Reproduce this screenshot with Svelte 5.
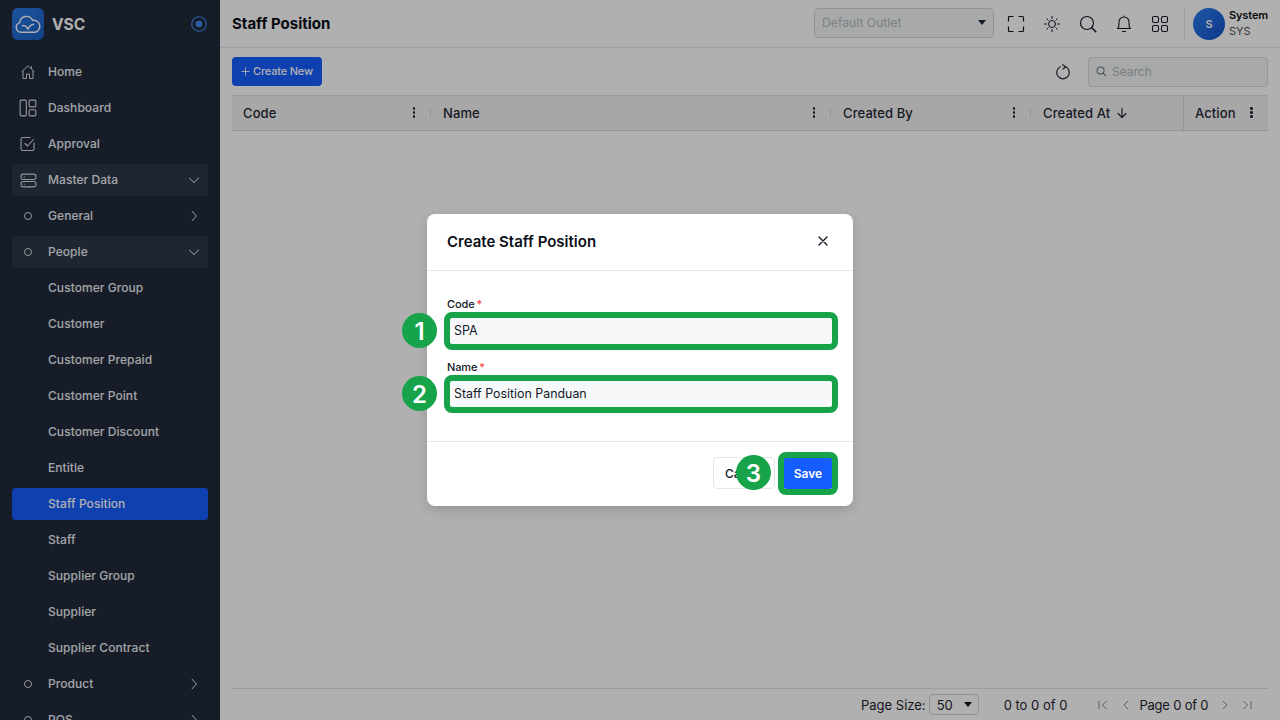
<script>
  const topNav = [
    { label: 'Home', icon: 'home' },
    { label: 'Dashboard', icon: 'dash' },
    { label: 'Approval', icon: 'check' },
    { label: 'Master Data', icon: 'server', chev: 'down', open: true },
    { label: 'General', icon: 'dot', chev: 'right' },
    { label: 'People', icon: 'dot', chev: 'down', open: true },
    { label: 'Customer Group' },
    { label: 'Customer' },
    { label: 'Customer Prepaid' },
    { label: 'Customer Point' },
    { label: 'Customer Discount' },
    { label: 'Entitle' },
    { label: 'Staff Position', active: true },
    { label: 'Staff' },
    { label: 'Supplier Group' },
    { label: 'Supplier' },
    { label: 'Supplier Contract' },
    { label: 'Product', icon: 'dot', chev: 'right' },
    { label: 'POS', icon: 'dot', chev: 'right' }
  ];
  const cols = [
    { label: 'Code', cls: 'c-code' },
    { label: 'Name', cls: 'c-name' },
    { label: 'Created By', cls: 'c-by' },
    { label: 'Created At', cls: 'c-at', sort: true }
  ];
</script>

<div class="app">
  <aside class="side">
    <div class="brand">
      <div class="logo">
        <svg viewBox="0 0 32 32" width="32" height="32" fill="none" stroke="#fff" stroke-width="1.400" stroke-linecap="round" stroke-linejoin="round">
          <path d="M9 24.200a4.900 4.900 0 0 1-1.200-9.600A6.700 6.700 0 0 1 20.600 12.400 5.900 5.900 0 0 1 23 24.200z"/>
          <path d="M10.500 17.800c2.600-.6 4.500 1 5.500 3.400 1-2.600 2.800-4.400 5.500-5"/>
        </svg>
      </div>
      <span class="brand-name">VSC</span>
      <svg class="pin" viewBox="0 0 16 16" width="16" height="16" fill="none">
        <circle cx="8" cy="8" r="7.300" stroke="#3f8cf0" stroke-width="1.100"/>
        <circle cx="8" cy="8" r="3.300" fill="#3f8cf0"/>
      </svg>
    </div>
    <nav class="nav">
      {#each topNav as item}
        <div class="item" class:open={item.open} class:active={item.active}>
          <span class="ico">
            {#if item.icon === 'home'}
              <svg viewBox="0 0 16 16" width="16" height="16" fill="none" stroke="currentColor" stroke-width="1" stroke-linejoin="round"><path d="M1.500 7.800 8 1.800l6.500 6M3 6.600V14.500h3.500V10h3v4.500H13V6.600M11.500 2.200v2.600"/></svg>
            {:else if item.icon === 'dash'}
              <svg viewBox="0 0 16 16" width="18" height="18" fill="none" stroke="currentColor" stroke-width="1"><rect x="1" y="1" width="5.500" height="14" rx="1"/><rect x="9" y="1" width="6" height="6" rx="1"/><rect x="9" y="9.500" width="6" height="5.500" rx="1"/></svg>
            {:else if item.icon === 'check'}
              <svg viewBox="0 0 16 16" width="16" height="16" fill="none" stroke="currentColor" stroke-width="1.100" stroke-linecap="round" stroke-linejoin="round"><path d="M14 7v6a1.500 1.500 0 0 1-1.500 1.500h-10A1.500 1.500 0 0 1 1 13V3a1.500 1.500 0 0 1 1.500-1.500H10"/><path d="m5 7.500 2.500 2.500 6-6.500"/></svg>
            {:else if item.icon === 'server'}
              <svg viewBox="0 0 16 16" width="17" height="17" fill="none" stroke="currentColor" stroke-width="1"><rect x="1" y="2" width="14" height="5" rx="2"/><rect x="1" y="9" width="14" height="5" rx="2"/><path d="M3.500 4.500h1M3.500 11.500h1"/></svg>
            {:else if item.icon === 'dot'}
              <span class="dot"></span>
            {/if}
          </span>
          <span class="lbl">{item.label}</span>
          {#if item.chev === 'down'}
            <svg class="chev" viewBox="0 0 12 12" width="12" height="12" fill="none" stroke="currentColor" stroke-width="1"><path d="m1 3.800 5 4.700 5-4.700"/></svg>
          {:else if item.chev === 'right'}
            <svg class="chev" viewBox="0 0 12 12" width="12" height="12" fill="none" stroke="currentColor" stroke-width="1"><path d="m3.800 1 4.700 5-4.700 5"/></svg>
          {/if}
        </div>
      {/each}
    </nav>
  </aside>

  <main class="main">
    <header class="top">
      <h1>Staff Position</h1>
      <div class="outlet"><span>Default Outlet</span><i class="caret"></i></div>
      <div class="tools">
        <svg viewBox="0 0 18 18" width="18" height="18" fill="none" stroke="#111827" stroke-width="1.200"><path d="M1.500 6.500V2.500a1 1 0 0 1 1-1h4M11.500 1.500h4a1 1 0 0 1 1 1v4M16.500 11.500v4a1 1 0 0 1-1 1h-4M6.500 16.500h-4a1 1 0 0 1-1-1v-4"/></svg>
        <svg viewBox="0 0 18 18" width="18" height="18" fill="none" stroke="#111827" stroke-width="1" stroke-linecap="round"><circle cx="9" cy="9" r="3.500"/><path d="M9 1.500v2M9 14.500v2M1.500 9h2M14.500 9h2M3.700 3.700l1.400 1.400M12.900 12.900l1.400 1.400M3.700 14.300l1.400-1.400M12.900 5.100l1.400-1.400"/></svg>
        <svg viewBox="0 0 18 18" width="18" height="18" fill="none" stroke="#111827" stroke-width="1.200" stroke-linecap="round"><circle cx="8" cy="8" r="6.500"/><path d="m12.800 12.800 4 4" stroke-width="1.600"/></svg>
        <svg viewBox="0 0 18 18" width="18" height="18" fill="none" stroke="#111827" stroke-width="1.100" stroke-linecap="round" stroke-linejoin="round"><path d="M2.500 13.500c1-1 1.500-2 1.500-4V7a5 5 0 0 1 10 0v2.500c0 2 .5 3 1.500 4zM9 1v1M7.500 16.500h3"/></svg>
        <svg viewBox="0 0 18 18" width="18" height="18" fill="none" stroke="#111827" stroke-width="1.100"><rect x="1.500" y="1.500" width="6" height="6" rx="1.500"/><rect x="10.500" y="1.500" width="6" height="6" rx="1.500"/><rect x="1.500" y="10.500" width="6" height="6" rx="1.500"/><rect x="10.500" y="10.500" width="6" height="6" rx="1.500"/></svg>
      </div>
      <div class="user">
        <div class="avatar">S</div>
        <div class="who"><b>System</b><span>SYS</span></div>
      </div>
    </header>

    <section class="content">
      <div class="toolbar">
        <button class="create">
          <svg viewBox="0 0 10 10" width="9" height="9" fill="none" stroke="currentColor" stroke-width="1"><path d="M5 .5v9M.5 5h9"/></svg>
          Create New
        </button>
        <svg class="refresh" viewBox="0 0 16 16" width="16" height="16" fill="none" stroke="#1f2937" stroke-width="1.200" stroke-linecap="round" stroke-linejoin="round"><path d="M5.300 2.800a6.300 6.300 0 1 0 5.400 0"/><path d="M7.600.8 10.800 2.800 8 5"/></svg>
        <div class="search">
          <svg viewBox="0 0 12 12" width="11" height="11" fill="none" stroke="#6b7280" stroke-width="1.100" stroke-linecap="round"><circle cx="5" cy="5" r="3.800"/><path d="m8 8 3 3"/></svg>
          <span>Search</span>
        </div>
      </div>

      <div class="thead">
        {#each cols as c}
          <div class="th {c.cls}">
            <span>{c.label}</span>
            {#if c.sort}
              <svg class="sort" viewBox="0 0 12 12" width="12" height="12" fill="none" stroke="#1f2937" stroke-width="1.200" stroke-linecap="round" stroke-linejoin="round"><path d="M6 1.500v9M2 6.500l4 4 4-4"/></svg>
            {:else}
              <i class="dots"></i>
              <i class="sep"></i>
            {/if}
          </div>
        {/each}
        <div class="th c-action"><span>Action</span><i class="dots"></i></div>
      </div>

      <div class="tbody"></div>

      <footer class="pager">
        <span>Page Size:</span>
        <div class="size"><span>50</span><i class="caret dark"></i></div>
        <span class="range">0 to 0 of 0</span>
        <div class="pages">
          <svg viewBox="0 0 12 12" width="12" height="12" fill="none" stroke="#8a8a8a" stroke-width="1"><path d="M2 2v8M9.500 2 5.500 6l4 4"/></svg>
          <svg class="p2" viewBox="0 0 12 12" width="12" height="12" fill="none" stroke="#8a8a8a" stroke-width="1"><path d="M8 2 4 6l4 4"/></svg>
          <span class="pg">Page 0 of 0</span>
          <svg viewBox="0 0 12 12" width="12" height="12" fill="none" stroke="#8a8a8a" stroke-width="1"><path d="m4 2 4 4-4 4"/></svg>
          <svg viewBox="0 0 12 12" width="12" height="12" fill="none" stroke="#8a8a8a" stroke-width="1"><path d="M10 2v8M2.500 2l4 4-4 4"/></svg>
        </div>
      </footer>
    </section>
  </main>

  <div class="overlay">
    <div class="modal">
      <div class="m-head">
        <h2>Create Staff Position</h2>
        <svg viewBox="0 0 12 12" width="12" height="12" fill="none" stroke="#111827" stroke-width="1.400" stroke-linecap="round"><path d="m2 2 8 8M10 2l-8 8"/></svg>
      </div>
      <div class="m-body">
        <div class="field">
          <span class="flabel">Code <em>*</em></span>
          <div class="input">SPA<span class="ring"></span><span class="badge">1</span></div>
        </div>
        <div class="field">
          <span class="flabel">Name <em>*</em></span>
          <div class="input">Staff Position Panduan<span class="ring"></span><span class="badge">2</span></div>
        </div>
      </div>
      <div class="m-foot">
        <div class="cancel">Cancel<span class="badge b3">3</span></div>
        <div class="save">Save<span class="ring"></span></div>
      </div>
    </div>
  </div>
</div>

<style>
  :global(body) { margin: 0; font-family: Inter, "Liberation Sans", sans-serif; }
  * { box-sizing: border-box; }
  .app { position: relative; display: flex; width: 1280px; height: 720px; overflow: hidden; background: #fff; }

  .side { width: 220px; flex: none; background: #212b3c; color: #e5e7eb; overflow: hidden; }
  .brand { display: flex; align-items: center; height: 48px; padding: 0 12px; }
  .logo { width: 32px; height: 32px; border-radius: 6px; background: linear-gradient(135deg, #2a7be6, #1b5fc4); }
  .logo svg { display: block; }
  .brand-name { margin-left: 8px; font-size: 15.500px; font-weight: 700; color: #fff; }
  .pin { margin-left: auto; margin-right: 1px; }
  .nav { display: flex; flex-direction: column; gap: 4px; padding: 8px 12px 0; }
  .item { display: flex; align-items: center; flex: none; height: 32px; border-radius: 4px; font-size: 12px; font-weight: 500; letter-spacing: .06px; color: #eceef2; }
  .item.open { background: #2c3748; }
  .item.active { background: #165dff; color: #fff; }
  .ico { display: flex; align-items: center; justify-content: center; width: 32px; margin-right: 4px; color: #d8dae0; }
  .ico svg { display: block; }
  .dot { width: 8px; height: 8px; border: 1px solid currentColor; border-radius: 50%; }
  .lbl { flex: 1; padding-bottom: 1px; }
  .chev { margin-right: 8px; }

  .main { flex: 1; min-width: 0; display: flex; flex-direction: column; }
  .top { display: flex; align-items: center; flex: none; height: 48px; padding: 0 12px 1px 12px; border-bottom: 1px solid #e5e7eb; }
  h1 { margin: 0; font-size: 15px; font-weight: 700; color: #0b0f19; }
  .outlet { display: flex; align-items: center; justify-content: space-between; width: 180px; height: 30px; margin-left: auto; padding: 0 7px 1px; border: 1px solid #cfd4dc; border-radius: 4px; background: #f3f6f5; font-size: 12.200px; color: #b5bac3; }
  .caret { width: 0; height: 0; border-left: 4px solid transparent; border-right: 4px solid transparent; border-top: 5px solid #1f2937; }
  .tools { display: flex; gap: 18px; margin-left: 13px; align-items: center; padding-top: 1px; }
  .tools svg { display: block; }
  .user { display: flex; align-items: center; height: 32px; margin-left: 15px; padding-left: 8px; border-left: 1px solid #e5e7eb; margin-top: 1px; }
  .avatar { display: grid; place-items: center; width: 32px; height: 32px; border-radius: 50%; background: linear-gradient(135deg, #2f7ff0, #1250c8); color: #fff; font-size: 11px; font-weight: 600; }
  .who { display: flex; flex-direction: column; margin: -2px 0 0 4px; font-size: 11px; line-height: 16px; color: #111; }
  .who b { font-weight: 600; letter-spacing: -.15px; }
  .who span { color: #4b5563; }

  .content { flex: 1; min-height: 0; display: flex; flex-direction: column; padding: 0 12px; }
  .toolbar { display: flex; align-items: center; flex: none; height: 47px; }
  .create { display: flex; align-items: center; gap: 3px; width: 90px; height: 29px; padding: 0 0 1px 9px; border: 0; border-radius: 4px; background: #165dff; color: #fff; font: 500 11px Inter, sans-serif; letter-spacing: -.18px; }
  .refresh { margin-left: auto; }
  .search { display: flex; align-items: center; gap: 5px; width: 180px; height: 30px; margin-left: 17px; padding-left: 7px; border: 1px solid #d5d9e0; border-radius: 4px; background: #f3f6f5; font-size: 12px; color: #b0b5be; }
  .thead { display: flex; flex: none; height: 36px; background: #f2f2f2; border-top: 1px solid #e2e4e8; border-bottom: 1px solid #d6d8dc; }
  .th { position: relative; display: flex; align-items: center; padding: 0 0 1px 11px; font-size: 13px; font-weight: 500; color: #1f2937; letter-spacing: .1px; }
  .c-code { width: 200px; }
  .c-name { width: 400px; }
  .c-by { width: 200px; }
  .c-at { width: 151px; gap: 6px; }
  .c-action { flex: 1; border-left: 1px solid #d6d8dc; }
  .dots { position: absolute; right: 17px; top: 11px; width: 2.500px; height: 2.500px; border-radius: 50%; background: #1f2937; box-shadow: 0 4px 0 #1f2937, 0 8px 0 #1f2937; }
  .c-action .dots { right: 15.500px; }
  .sep { position: absolute; right: 1px; top: 12px; width: 1.500px; height: 10px; background: #d4d5d8; }
  .tbody { flex: 1; min-height: 0; }
  .pager { display: flex; align-items: center; flex: none; height: 32px; padding-left: 629px; border-top: 1px solid #e1e3e6; font-size: 13px; color: #1f2430; }
  .size { display: flex; align-items: center; justify-content: space-between; width: 50px; height: 21px; margin-left: 3px; padding: 0 6px 0 7px; border: 1px solid #d2d4d8; border-radius: 4px; }
  .caret.dark { border-top-color: #111; }
  .range { margin-left: 25px; }
  .pages { display: flex; align-items: center; gap: 10px; margin-left: 30px; }
  .pages svg { display: block; }
  .p2 { margin-left: 1px; margin-right: -3px; }
  .pg { letter-spacing: -.2px; margin-right: 1px; }

  .overlay { position: absolute; inset: 0; display: flex; align-items: center; justify-content: center; background: rgba(0,0,0,.31); }
  .modal { width: 426px; height: 292px; display: flex; flex-direction: column; border-radius: 8px; background: #fff; box-shadow: 0 4px 12px rgba(0,0,0,.15); }
  .m-head { display: flex; align-items: center; justify-content: space-between; flex: none; height: 57px; padding: 0 24px 2px 20px; border-bottom: 1px solid #e5e7eb; }
  h2 { margin: 0; font-size: 15px; font-weight: 600; color: #0b0f19; }
  .m-body { flex: 1; padding: 24px 20px 0; border-bottom: 1px solid #e5e7eb; }
  .field { display: flex; flex-direction: column; gap: 2px; margin-bottom: 11px; }
  .flabel { height: 18px; font-size: 11px; font-weight: 500; line-height: 18px; letter-spacing: -.1px; color: #111827; }
  .flabel em { margin-left: -1px; font-style: normal; color: #f53f3f; }
  .input { position: relative; display: flex; align-items: center; height: 32px; padding: 0 0 1px 7px; border-radius: 4px; background: #f7f8fa; font-size: 12.400px; color: #111827; }
  .ring { position: absolute; inset: -3px -5px -3px -3px; border: 6px solid #16a34a; border-radius: 8px; }
  .badge { position: absolute; left: -45px; top: -2px; display: grid; place-items: center; width: 35px; height: 35px; padding-top: 2px; border-radius: 50%; background: #16a34a; color: #fff; font-size: 24px; font-weight: 600; }
  .m-foot { display: flex; justify-content: flex-end; align-items: center; flex: none; height: 64px; padding: 0 20px 2px 0; gap: 8px; }
  .cancel { position: relative; display: flex; align-items: center; width: 62px; height: 32px; padding-left: 11px; border: 1px solid #e5e7eb; border-radius: 4px; font-size: 12px; font-weight: 500; color: #111827; }
  .save { position: relative; display: grid; place-items: center; width: 50px; height: 32px; border-radius: 4px; background: #165dff; color: #fff; font-size: 12px; font-weight: 600; }
  .save .ring { inset: -5px -5px -6px -5px; }
  .b3 { left: 22px; top: -3px; }
</style>
